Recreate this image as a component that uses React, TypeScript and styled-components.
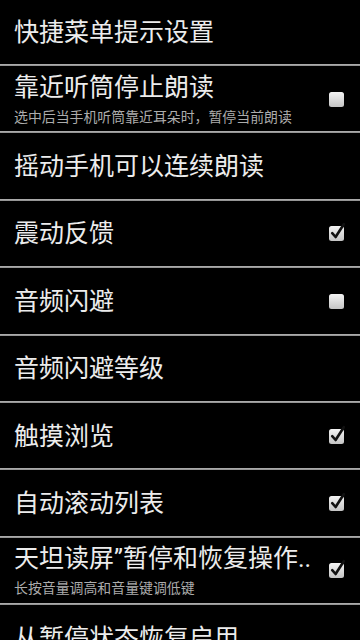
import React from "react";
import styled, { createGlobalStyle } from "styled-components";

const Global = createGlobalStyle`
  html, body { margin: 0; padding: 0; background: #000; }
  body { overflow: hidden; }
  #root { width: 360px; height: 640px; overflow: hidden; background: #000; }
`;

const List = styled.div`
  display: flex;
  flex-direction: column;
  width: 360px;
  font-family: Roboto, "Noto Sans CJK SC", sans-serif;
`;

const Row = styled.div<{ $first?: boolean }>`
  display: flex;
  align-items: center;
  height: ${(p) => (p.$first ? "64px" : "65.4px")};
  flex-shrink: 0;
  padding: 2px 12px 0 14px;
  box-sizing: border-box;
`;

const Separator = styled.div`
  height: 2px;
  flex-shrink: 0;
  background: linear-gradient(#b4b4b4, #8a8a8a);
`;

const TextCol = styled.div`
  display: flex;
  flex-direction: column;
  flex: 1;
  min-width: 0;
`;

const Title = styled.div`
  font-size: 25px;
  line-height: 28px;
  color: #ececec;
  white-space: nowrap;
  overflow: hidden;
`;

const Summary = styled.div`
  margin-top: 6px;
  font-size: 13.9px;
  line-height: 18px;
  color: #acacac;
  white-space: nowrap;
`;

const BoxWrap = styled.div`
  width: 20px;
  height: 20px;
  flex-shrink: 0;
  margin-left: 8px;
  margin-top: -4px;
`;

const CheckBox: React.FC<{ checked: boolean }> = ({ checked }) => (
  <BoxWrap>
    <svg width="20" height="20" viewBox="0 0 20 20">
      <defs>
        <linearGradient id="cbg" x1="0" y1="0" x2="0" y2="1">
          <stop offset="0" stopColor="#f4f4f4" />
          <stop offset="1" stopColor="#c4c4c4" />
        </linearGradient>
      </defs>
      <rect x="1" y="4" width="15" height="15" rx="2.5" fill="url(#cbg)" />
      {checked && (
        <path
          d="M4.2 11.2 L7.6 15 L15.8 2.2"
          stroke="#111"
          strokeWidth="2.6"
          fill="none"
          strokeLinecap="round"
          strokeLinejoin="round"
        />
      )}
    </svg>
  </BoxWrap>
);

type Item = { title: string; summary?: string; check?: boolean };

const items: Item[] = [
  { title: "快捷菜单提示设置" },
  { title: "靠近听筒停止朗读", summary: "选中后当手机听筒靠近耳朵时，暂停当前朗读", check: false },
  { title: "摇动手机可以连续朗读" },
  { title: "震动反馈", check: true },
  { title: "音频闪避", check: false },
  { title: "音频闪避等级" },
  { title: "触摸浏览", check: true },
  { title: "自动滚动列表", check: true },
  { title: "天坦读屏”暂停和恢复操作..", summary: "长按音量调高和音量键调低键", check: true },
  { title: "从暂停状态恢复启用" },
];

export default function App() {
  return (
    <>
      <Global />
      <List>
        {items.map((it, i) => (
          <React.Fragment key={i}>
            {i > 0 && <Separator />}
            <Row $first={i === 0}>
              <TextCol>
                <Title>{it.title}</Title>
                {it.summary && <Summary>{it.summary}</Summary>}
              </TextCol>
              {it.check !== undefined && <CheckBox checked={it.check} />}
            </Row>
          </React.Fragment>
        ))}
      </List>
    </>
  );
}
